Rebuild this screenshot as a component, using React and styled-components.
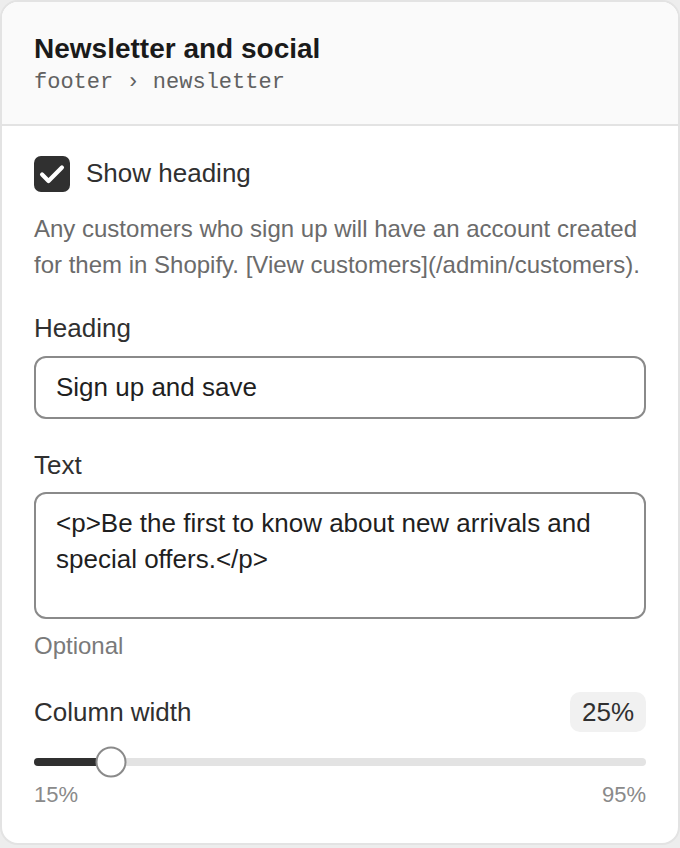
import styled, { createGlobalStyle } from "styled-components";

const GlobalStyle = createGlobalStyle`
  * { box-sizing: border-box; }
  body {
    margin: 0;
    background: #ededed;
    font-family: "Liberation Sans", Arial, sans-serif;
  }
`;

const Card = styled.div`
  width: 680px;
  min-height: 845px;
  background: #ffffff;
  border: 2px solid #e3e3e3;
  border-radius: 18px;
  overflow: hidden;
`;

const Header = styled.div`
  background: #fafafa;
  border-bottom: 2px solid #e3e3e3;
  padding: 31px 32px 28px;
`;

const Title = styled.h1`
  margin: 0;
  font-size: 28px;
  line-height: 32px;
  font-weight: 700;
  color: #1a1a1a;
`;

const Path = styled.div`
  margin-top: 5px;
  font-family: "Liberation Mono", "DejaVu Sans Mono", monospace;
  font-size: 22px;
  line-height: 26px;
  color: #616161;
`;

const Body = styled.div`
  padding: 30px 32px 36px;
  display: flex;
  flex-direction: column;
`;

const CheckRow = styled.label`
  display: flex;
  align-items: center;
  gap: 16px;
  font-size: 26px;
  line-height: 30px;
  color: #303030;
  height: 36px;
`;

const CheckText = styled.span`
  margin-top: -3px;
`;

const Box = styled.span`
  width: 36px;
  height: 36px;
  border-radius: 7px;
  background: ${(p) => (p.checked ? "#303030" : "#ffffff")};
  display: flex;
  align-items: center;
  justify-content: center;
`;

const Help = styled.p`
  margin: 19px 0 0;
  font-size: 24px;
  line-height: 36px;
  color: #6b6b6b;
`;

const Field = styled.div`
  margin-top: ${(p) => p.top || 32}px;
  display: flex;
  flex-direction: column;
  gap: ${(p) => (p.gap === undefined ? 14 : p.gap)}px;
`;

const Label = styled.div`
  font-size: 26px;
  line-height: 28px;
  color: #303030;
`;

const Input = styled.div`
  height: 63px;
  border: 2px solid #8a8a8a;
  border-radius: 12px;
  padding: 0 20px;
  display: flex;
  align-items: center;
  font-size: 26px;
  color: #1f1f1f;
`;

const TextArea = styled.div`
  height: 127px;
  border: 2px solid #8a8a8a;
  border-radius: 12px;
  padding: 11px 20px;
  font-size: 26px;
  line-height: 36px;
  color: #1f1f1f;
`;

const Hint = styled.div`
  margin-top: 13px;
  font-size: 24px;
  line-height: 28px;
  color: #7a7a7a;
`;

const RangeHead = styled.div`
  display: flex;
  align-items: center;
  justify-content: space-between;
`;

const Badge = styled.span`
  height: 40px;
  padding: 0 12px;
  border-radius: 10px;
  background: #f1f1f1;
  display: flex;
  align-items: center;
  font-size: 26px;
  color: #303030;
`;

const Track = styled.div`
  position: relative;
  height: 8px;
  margin: 26px 0 0;
  border-radius: 4px;
  background: #e3e3e3;
`;

const Fill = styled.div`
  height: 100%;
  border-radius: 4px;
  background: #303030;
`;

const Thumb = styled.div`
  position: absolute;
  top: 50%;
  width: 31px;
  height: 31px;
  border-radius: 50%;
  background: #ffffff;
  border: 2px solid #8a8a8a;
  transform: translate(-50%, -50%);
`;

const Scale = styled.div`
  margin-top: 17px;
  display: flex;
  justify-content: space-between;
  font-size: 22px;
  line-height: 24px;
  color: #8a8a8a;
`;

function Check() {
  return (
    <svg width="28" height="28" viewBox="0 0 24 24" fill="none">
      <path
        d="M3.5 12.5l5.5 5.5L20.5 6.5"
        stroke="#ffffff"
        strokeWidth="3.6"
        strokeLinecap="round"
        strokeLinejoin="round"
      />
    </svg>
  );
}

export default function App() {
  const min = 15;
  const max = 95;
  const value = 25;
  const pct = ((value - min) / (max - min)) * 100;

  return (
    <>
      <GlobalStyle />
      <Card>
        <Header>
          <Title>Newsletter and social</Title>
          <Path>footer › newsletter</Path>
        </Header>
        <Body>
          <CheckRow>
            <Box checked>
              <Check />
            </Box>
            <CheckText>Show heading</CheckText>
          </CheckRow>
          <Help>
            Any customers who sign up will have an account created for them in
            Shopify. [View customers](/admin/customers).
          </Help>
          <Field top={31}>
            <Label>Heading</Label>
            <Input>Sign up and save</Input>
          </Field>
          <Field gap={13}>
            <Label>Text</Label>
            <TextArea>
              &lt;p&gt;Be the first to know about new arrivals and special
              offers.&lt;/p&gt;
            </TextArea>
          </Field>
          <Hint>Optional</Hint>
          <Field gap={0}>
            <RangeHead>
              <Label>Column width</Label>
              <Badge>{value}%</Badge>
            </RangeHead>
          </Field>
          <Track>
            <Fill style={{ width: `${pct}%` }} />
            <Thumb style={{ left: `${pct}%` }} />
          </Track>
          <Scale>
            <span>{min}%</span>
            <span>{max}%</span>
          </Scale>
        </Body>
      </Card>
    </>
  );
}
